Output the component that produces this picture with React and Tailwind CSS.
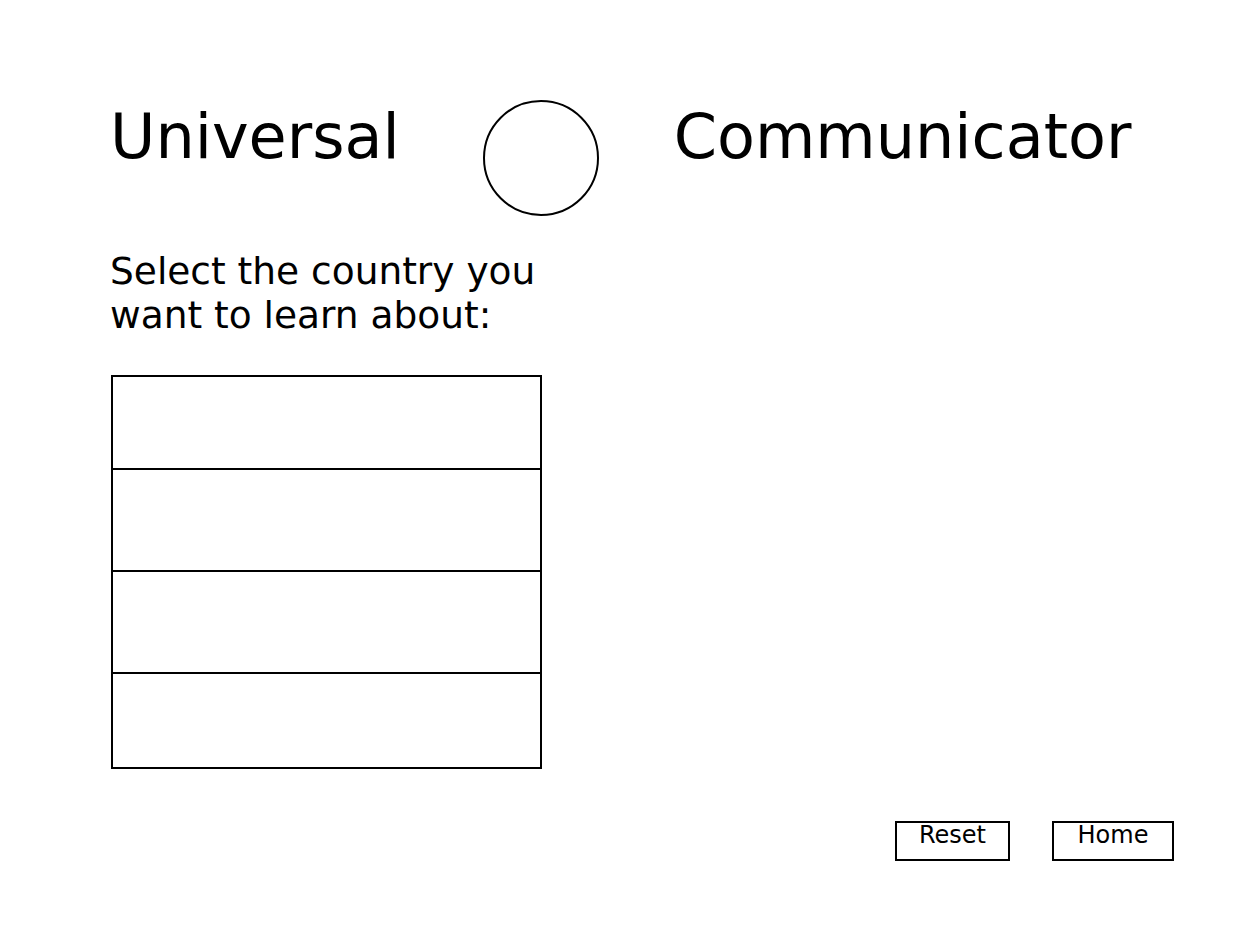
import React from 'react';

const rows = [
  { id: 1, h: 'h-[91px]' },
  { id: 2, h: 'h-[102px]' },
  { id: 3, h: 'h-[102px]' },
  { id: 4, h: 'h-[95px]' },
];

export default function App() {
  return (
    <div className="w-[1250px] h-[938px] bg-white text-black font-['DejaVu_Sans',sans-serif] relative">
      <div className="flex items-start pt-[100px] pl-[110px]">
        <h1 className="mt-[6px] text-[62px] leading-none font-normal">Universal</h1>
        <div className="ml-[83px] w-[116px] h-[116px] rounded-full border-2 border-black shrink-0" />
        <h1 className="mt-[6px] ml-[75px] text-[62px] leading-none font-normal">Communicator</h1>
      </div>

      <p className="mt-[33px] ml-[110px] text-[37.5px] leading-[44px] w-[470px]">
        Select the country you want to learn about:
      </p>

      <div className="mt-[38px] ml-[111px] w-[431px] border-2 border-black flex flex-col">
        {rows.map((r, i) => (
          <div key={r.id} className={`${r.h} ${i > 0 ? 'border-t-2 border-black' : ''}`} />
        ))}
      </div>

      <div className="flex justify-end gap-[42px] mt-[52px] pr-[76px]">
        <button className="w-[115px] h-[40px] border-2 border-black text-[24px] leading-none flex justify-center items-start">
          Reset
        </button>
        <button className="w-[122px] h-[40px] border-2 border-black text-[24px] leading-none flex justify-center items-start">
          Home
        </button>
      </div>
    </div>
  );
}
